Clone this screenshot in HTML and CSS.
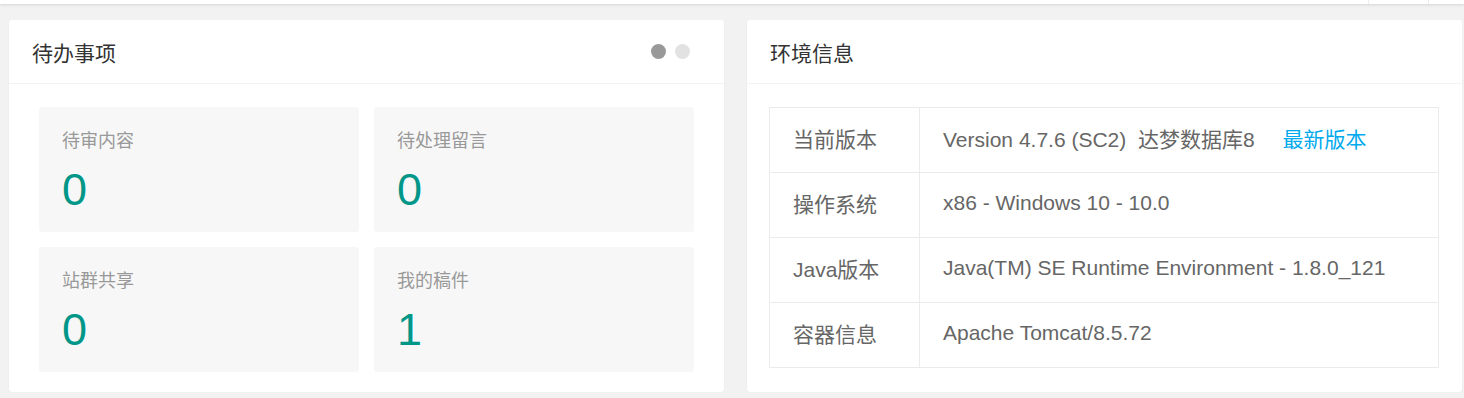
FILE: index.html
```html
<!DOCTYPE html>
<html lang="zh-CN">
<head>
    <meta charset="UTF-8">
    <meta name="viewport" content="width=device-width, initial-scale=1.0">
    <title>控制台</title>
    <link rel="stylesheet" href="styles.css">
</head>
<body>
    <div class="top-bar">
        <span class="top-item"></span>
        <span class="top-item last"></span>
    </div>

    <div class="console">
        <div class="card">
            <div class="card-header">
                <span>待办事项</span>
                <div class="dots">
                    <i class="dot active"></i>
                    <i class="dot"></i>
                </div>
            </div>
            <div class="card-body backlog">
                <a class="backlog-item">
                    <h3>待审内容</h3>
                    <p>0</p>
                </a>
                <a class="backlog-item">
                    <h3>待处理留言</h3>
                    <p>0</p>
                </a>
                <a class="backlog-item">
                    <h3>站群共享</h3>
                    <p>0</p>
                </a>
                <a class="backlog-item">
                    <h3>我的稿件</h3>
                    <p>1</p>
                </a>
            </div>
        </div>

        <div class="card">
            <div class="card-header">
                <span>环境信息</span>
            </div>
            <div class="card-body env">
                <table class="env-table">
                    <colgroup>
                        <col class="label-col">
                        <col>
                    </colgroup>
                    <tr>
                        <td>当前版本</td>
                        <td>Version 4.7.6 (SC2)&nbsp; 达梦数据库8 <a class="link">最新版本</a></td>
                    </tr>
                    <tr>
                        <td>操作系统</td>
                        <td>x86 - Windows 10 - 10.0</td>
                    </tr>
                    <tr>
                        <td>Java版本</td>
                        <td>Java(TM) SE Runtime Environment - 1.8.0_121</td>
                    </tr>
                    <tr>
                        <td>容器信息</td>
                        <td>Apache Tomcat/8.5.72</td>
                    </tr>
                </table>
            </div>
        </div>
    </div>
</body>
</html>
```

FILE: styles.css
```css
body {
    margin: 0;
    background-color: #f2f2f2;
    font-family: "Liberation Sans", "Noto Sans CJK SC", sans-serif;
    color: #666;
}
.top-bar {
    height: 4px;
    background-color: #fff;
    box-shadow: 0 1px 3px rgba(0, 0, 0, 0.12);
    display: flex;
    justify-content: flex-end;
}
.top-item {
    width: 59px;
    border-left: 1px solid #eee;
}
.top-item.last {
    width: 35px;
}
.console {
    display: grid;
    grid-template-columns: 715px 715px;
    gap: 23px;
    padding: 16px 2px 0 9px;
}
.card {
    background-color: #fff;
    border-radius: 3px;
    box-shadow: 0 1px 2px rgba(0, 0, 0, 0.05);
    height: 372px;
}
.card-header {
    height: 63px;
    border-bottom: 1px solid #f3f3f3;
    padding: 0 34px 0 23px;
    display: flex;
    align-items: center;
    justify-content: space-between;
    font-size: 21px;
    color: #333;
}
.dots {
    display: flex;
    gap: 9px;
}
.dot {
    width: 15px;
    height: 15px;
    border-radius: 50%;
    background-color: #e2e2e2;
}
.dot.active {
    background-color: #999;
}
.backlog {
    display: grid;
    grid-template-columns: 320px 320px;
    grid-auto-rows: 125px;
    gap: 15px;
    padding: 23px 30px 0;
}
.backlog-item {
    display: block;
    background-color: #f7f7f7;
    border-radius: 3px;
    padding: 22px 23px 0;
    color: #999;
}
.backlog-item h3 {
    margin: 0;
    font-size: 18px;
    font-weight: normal;
    line-height: 24px;
}
.backlog-item p {
    margin: 12px 0 0;
    font-size: 45px;
    line-height: 50px;
    color: #009688;
}
.env {
    padding: 23px 23px 0 22px;
}
.env-table {
    width: 670px;
    border-collapse: collapse;
    font-size: 21px;
    color: #666;
}
.label-col {
    width: 150px;
}
.env-table td {
    height: 60px;
    padding: 0 23px 4px;
    border: 1px solid #ebebeb;
}
.link {
    margin-left: 22px;
    color: #01aaed;
}
```
